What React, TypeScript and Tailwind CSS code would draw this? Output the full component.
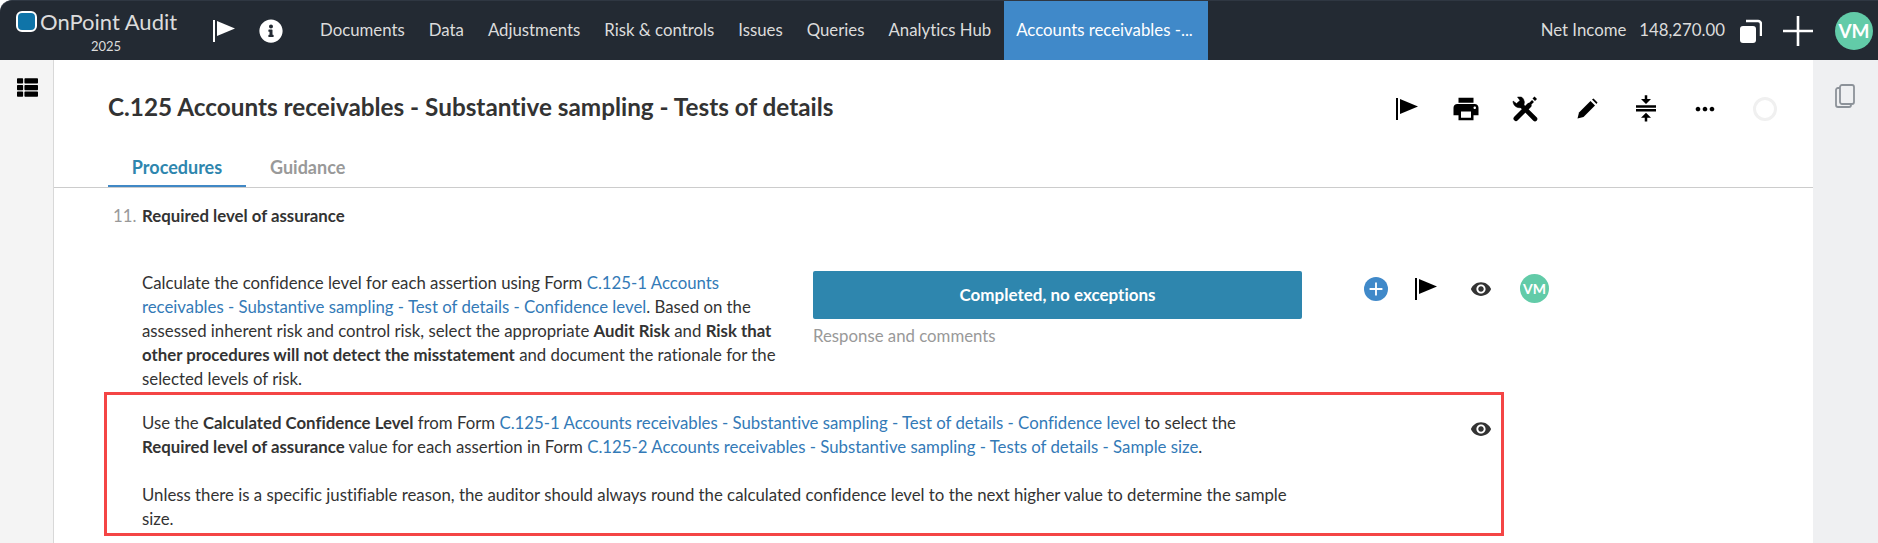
import React from "react";
import { FaInfoCircle, FaThList } from "react-icons/fa";
import { MdPrint, MdCompress, MdMoreHoriz, MdVisibility, MdAdd } from "react-icons/md";

function Flag({ className, color = "#000" }: { className?: string; color?: string }) {
  return (
    <svg viewBox="0 0 22 22" className={className} fill={color}>
      <rect x="0" y="0" width="2" height="22" />
      <path d="M4 1 L22 8.5 L4 16 Z" />
    </svg>
  );
}

function Pencil() {
  return (
    <svg viewBox="0 0 24 24" className="w-6 h-6" fill="#000">
      <path d="M2.5 21.5 L4 15.5 L15.5 4 L20 8.5 L8.5 20 Z" />
      <path d="M17 2.5 L18.5 1.5 L22.5 5.5 L21.5 7 Z" />
    </svg>
  );
}

function Tools() {
  return (
    <svg viewBox="0 0 26 26" className="w-[26px] h-[26px]" fill="none" stroke="#000">
      <path d="M23 23 L8 8" strokeWidth="4.6" strokeLinecap="round" />
      <path d="M1 5 a6.5 6.5 0 0 0 9.5 6 a6.5 6.5 0 0 0 -1 -10 L5.5 1 L8 4.5 L4.5 7.5 Z" fill="#000" strokeWidth="0.5" />
      <path d="M4 22.5 L17 9.5" strokeWidth="5" strokeLinecap="round" />
      <path d="M17 9 L21 5" strokeWidth="2.6" />
      <path d="M21.5 1.5 L24 4" strokeWidth="2.8" />
    </svg>
  );
}

function A({ children }: { children: React.ReactNode }) {
  return <a className="text-[#337ab7]">{children}</a>;
}

const nav = ["Documents", "Data", "Adjustments", "Risk & controls", "Issues", "Queries", "Analytics Hub"];

export default function App() {
  return (
    <div className="h-[543px] w-[1878px] overflow-hidden bg-white flex flex-col font-['Lato','Open_Sans',sans-serif] text-[16.8px] leading-6 text-[#333] [font-variant-ligatures:none]">
      <header className="h-[60px] shrink-0 bg-[#232a33] border-t border-[#2f3742] rounded-tl-[12px] flex items-center text-[#dcdcdc]">
        <div className="w-[213px] pl-4 flex flex-col shrink-0 -mt-[1px]">
          <div className="flex items-center h-[30px]">
            <span className="w-[21px] h-[21px] rounded-[6px] bg-[#0f74a8] border-2 border-white shrink-0" />
            <span className="ml-[3px] text-[22px] leading-[30px] text-[#dcdcdc] whitespace-nowrap">OnPoint Audit</span>
          </div>
          <span className="text-[13px] leading-4 text-[#dcdcdc] text-center w-[180px] mt-[1px]">2025</span>
        </div>
        <div className="w-[22px] shrink-0"><Flag className="w-[22px] h-[22px]" color="#fff" /></div>
        <FaInfoCircle className="ml-[24px] text-white w-6 h-6 shrink-0" />
        <nav className="flex items-center ml-[25px] h-full">
          {nav.map((n) => (
            <span key={n} className="px-3 pb-[2px] whitespace-nowrap">{n}</span>
          ))}
          <span className="w-[204px] ml-[1px] h-full bg-[#4089c9] text-white px-3 pb-[2px] flex items-center whitespace-nowrap">Accounts receivables -...</span>
        </nav>
        <div className="ml-auto flex items-center pr-[5px]">
          <span className="whitespace-nowrap pb-[2px]">Net Income</span>
          <span className="ml-[13px] whitespace-nowrap pb-[2px]">148,270.00</span>
          <svg viewBox="0 0 22 24" className="ml-[15px] w-[22px] h-6" fill="#fff">
            <rect x="0" y="7" width="16" height="17" rx="3" />
            <path d="M6 2 H18 a3 3 0 0 1 3 3 V17" fill="none" stroke="#fff" strokeWidth="2.5" />
          </svg>
          <svg viewBox="0 0 30 30" className="ml-[21px] w-[30px] h-[30px]" stroke="#fff" strokeWidth="2.6">
            <path d="M0 15 H30 M15 0 V30" />
          </svg>
          <span className="ml-[22px] w-[38px] h-[38px] rounded-full bg-[#62cba8] text-white font-bold text-[19px] flex items-center justify-center">VM</span>
        </div>
      </header>

      <div className="flex-1 flex min-h-0">
        <aside className="w-[54px] shrink-0 bg-[#f4f4f4] border-r border-[#d8d8d8] flex justify-center pt-[17px]">
          <FaThList className="w-[21px] h-[21px] text-black ml-[2px]" />
        </aside>

        <main className="flex-1 min-w-0 overflow-hidden">
          <div className="border-b border-[#cccccc] h-[128px] flex flex-col pl-[54px]">
            <div className="flex items-center h-[94px] pr-[36px]">
              <h1 className="text-[24.3px] font-bold leading-8 text-[#333]">C.125 Accounts receivables - Substantive sampling - Tests of details</h1>
              <div className="ml-auto flex items-center mt-[3px]">
                <Flag className="w-[22px] h-[22px]" />
                <MdPrint className="ml-[33px] w-[30px] h-[30px] text-black" />
                <span className="ml-[31px]"><Tools /></span>
                <span className="ml-[37px]"><Pencil /></span>
                <MdCompress className="ml-[32px] w-[30px] h-[30px] text-black" />
                <MdMoreHoriz className="ml-[30px] w-[28px] h-[28px] text-black" />
                <span className="ml-[34px] w-6 h-6 rounded-full border-[3px] border-[#f0f0f0]" />
              </div>
            </div>
            <div className="flex h-[33px] font-bold text-[18px]">
              <span className="w-[138px] text-center text-[#2e86ae] border-b-[2px] border-[#4088c5] h-[33px] leading-[26px]">Procedures</span>
              <span className="ml-[24px] text-[#999] leading-[26px]">Guidance</span>
            </div>
          </div>

          <div className="pl-[50px] pt-[16px]">
            <div className="flex h-6 pl-[9px]">
              <span className="w-[29px] text-[#999]">11.</span>
              <span className="font-bold">Required level of assurance</span>
            </div>

            <div className="flex mt-[43px] pl-[38px]">
              <p className="w-[650px] shrink-0">
                Calculate the confidence level for each assertion using Form <A>C.125-1 Accounts receivables - Substantive sampling - Test of details - Confidence level</A>. Based on the assessed inherent risk and control risk, select the appropriate <b>Audit Risk</b> and <b>Risk that other procedures will not detect the misstatement</b> and document the rationale for the selected levels of risk.
              </p>
              <div className="ml-[21px] w-[489px] shrink-0">
                <div className="h-[48px] bg-[#2e86ae] rounded-[2px] text-white font-bold text-[17px] flex items-center justify-center">Completed, no exceptions</div>
                <div className="mt-[5px] text-[#999]">Response and comments</div>
              </div>
              <div className="ml-[62px] flex items-start pt-[6px]">
                <span className="w-6 h-6 rounded-full bg-[#4089c9] flex items-center justify-center">
                  <MdAdd className="w-[22px] h-[22px] text-white" />
                </span>
                <Flag className="ml-[27px] w-[22px] h-[22px] mt-[1px]" />
                <MdVisibility className="ml-[33px] w-[22px] h-[22px] mt-[1px] text-[#333]" />
                <span className="ml-[28px] w-[29px] h-[29px] -mt-[3px] rounded-full bg-[#62cba8] text-white font-bold text-[14px] flex items-center justify-center">VM</span>
              </div>
            </div>

            <div className="border-[3px] border-[#f44545] w-[1400px] h-[144px] pl-[35px] pt-[16px] flex mt-[1px]">
              <div className="w-[1150px] shrink-0">
                <p>
                  Use the <b>Calculated Confidence Level</b> from Form <A>C.125-1 Accounts receivables - Substantive sampling - Test of details - Confidence level</A> to select the <b>Required level of assurance</b> value for each assertion in Form <A>C.125-2 Accounts receivables - Substantive sampling - Tests of details - Sample size</A>.
                </p>
                <p className="mt-6">
                  Unless there is a specific justifiable reason, the auditor should always round the calculated confidence level to the next higher value to determine the sample size.
                </p>
              </div>
              <MdVisibility className="ml-[178px] mt-[7px] w-[22px] h-[22px] text-[#333] shrink-0" />
            </div>
          </div>
        </main>

        <aside className="w-[65px] shrink-0 bg-[#eff0f2] flex justify-center pt-[24px]">
          <svg viewBox="0 0 20 24" className="w-[20px] h-[24px] -ml-[1px]" fill="none" stroke="#8c9299" strokeWidth="1.8">
            <rect x="5" y="1" width="14" height="19" rx="2" />
            <path d="M5 4 H3 a2 2 0 0 0 -2 2 V21 a2 2 0 0 0 2 2 H14 a2 2 0 0 0 2 -2 V20" />
          </svg>
        </aside>
      </div>
    </div>
  );
}
